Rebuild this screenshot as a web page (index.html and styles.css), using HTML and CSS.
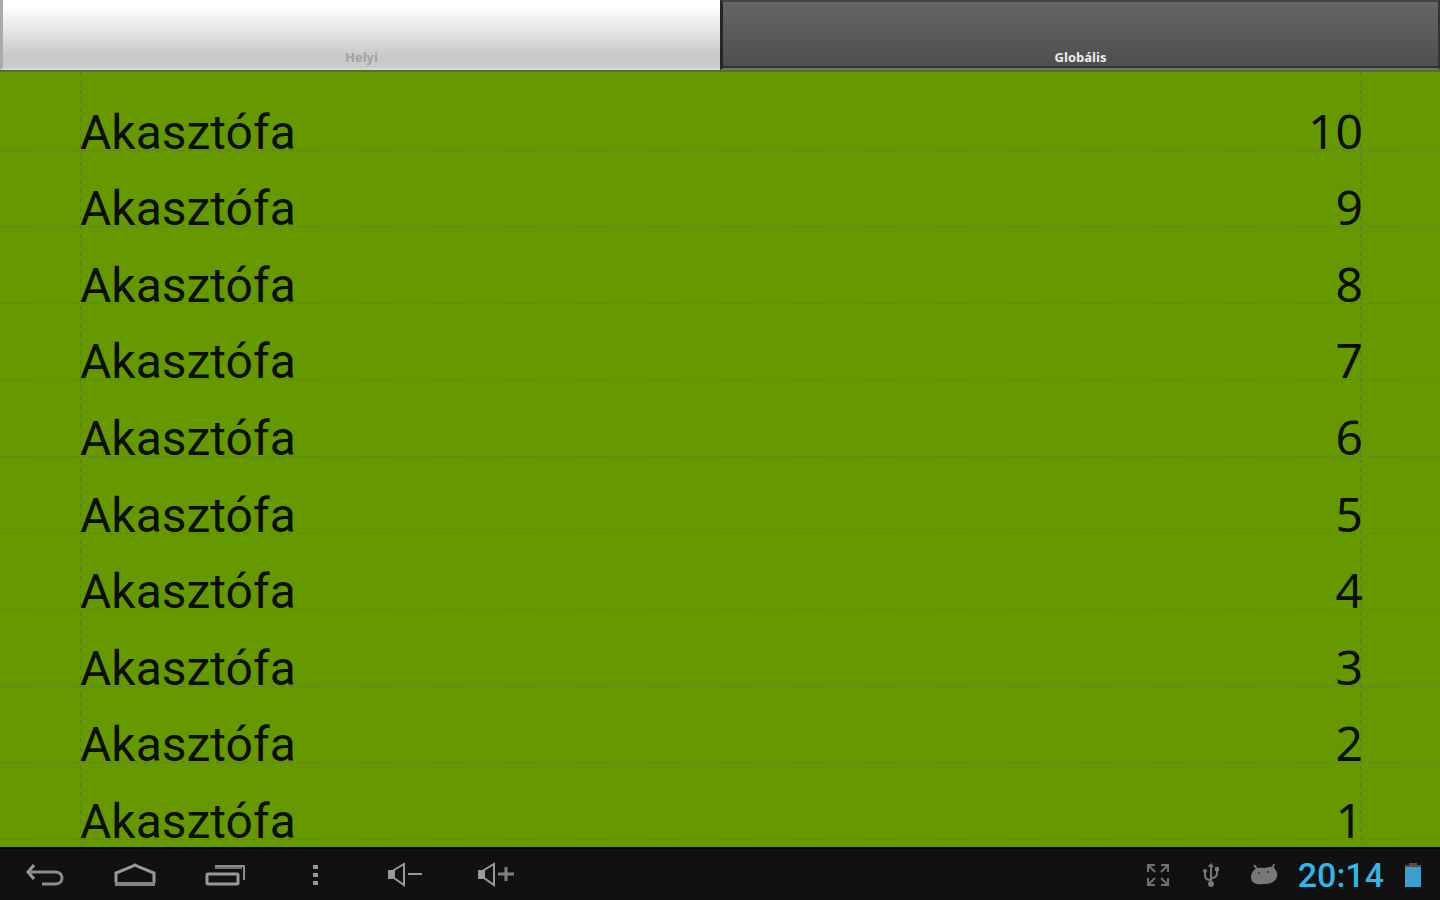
FILE: index.html
```html
<!DOCTYPE html>
<html lang="hu">
<head>
  <meta charset="UTF-8">
  <meta name="viewport" content="width=device-width, initial-scale=1.0">
  <title>Akasztófa</title>
  <link rel="stylesheet" href="styles.css">
</head>
<body>
  <!-- Tabs -->
  <nav class="tabs">
    <button class="tab" type="button">Helyi</button>
    <button class="tab active" type="button">Globális</button>
  </nav>

  <!-- Score list -->
  <main class="board">
    <table class="scores">
      <tbody>
        <tr><td class="name">Akasztófa</td><td class="score">10</td></tr>
        <tr><td class="name">Akasztófa</td><td class="score">9</td></tr>
        <tr><td class="name">Akasztófa</td><td class="score">8</td></tr>
        <tr><td class="name">Akasztófa</td><td class="score">7</td></tr>
        <tr><td class="name">Akasztófa</td><td class="score">6</td></tr>
        <tr><td class="name">Akasztófa</td><td class="score">5</td></tr>
        <tr><td class="name">Akasztófa</td><td class="score">4</td></tr>
        <tr><td class="name">Akasztófa</td><td class="score">3</td></tr>
        <tr><td class="name">Akasztófa</td><td class="score">2</td></tr>
        <tr><td class="name">Akasztófa</td><td class="score">1</td></tr>
      </tbody>
    </table>
  </main>

  <!-- System bar -->
  <footer class="system-bar">
    <div class="nav-buttons">
      <button type="button" aria-label="Vissza">
        <svg width="42" height="28" viewBox="0 0 42 28" fill="none" stroke="#999">
          <path d="M10 4L4 11L10 18" stroke-width="3"/>
          <path d="M5 11H31C36 11 38 14 38 17C38 20 36 23 31 23H18" stroke-width="3" stroke="#8c8c8c"/>
        </svg>
      </button>
      <button type="button" aria-label="Kezdőlap">
        <svg width="42" height="28" viewBox="0 0 42 28" fill="none" stroke="#999">
          <path d="M2 22V12L17 6L21 4L25 6L40 12V22" stroke-width="3"/>
          <path d="M1 23H41" stroke-width="4" stroke="#858585"/>
        </svg>
      </button>
      <button type="button" aria-label="Legutóbbiak">
        <svg width="42" height="28" viewBox="0 0 42 28" fill="none">
          <path d="M11 6H38" stroke-width="4" stroke="#707070"/>
          <path d="M11 5H40V19" stroke-width="2" stroke="#8c8c8c"/>
          <rect x="3" y="13" width="31" height="10" rx="1" stroke-width="3" stroke="#999"/>
        </svg>
      </button>
      <button type="button" aria-label="Menü">
        <svg width="42" height="28" viewBox="0 0 42 28" fill="#999">
          <path d="M19 4h5v4h-5zM19 12h5v4h-5zM19 20h5v4h-5z"/>
        </svg>
      </button>
      <button type="button" aria-label="Halkítás">
        <svg width="42" height="28" viewBox="0 0 42 28" fill="none" stroke="#999" stroke-width="2">
          <path d="M10 9L20 3V24L10 17Z"/>
          <path d="M4 9h5v9h-5z" fill="#999" stroke="none"/>
          <path d="M24 13H38"/>
        </svg>
      </button>
      <button type="button" aria-label="Hangosítás">
        <svg width="42" height="28" viewBox="0 0 42 28" fill="none" stroke="#999" stroke-width="2">
          <path d="M10 9L20 3V24L10 17Z"/>
          <path d="M4 9h5v9h-5z" fill="#999" stroke="none"/>
          <path d="M24 13H40M32 6V20" stroke-width="3" stroke="#808080"/>
        </svg>
      </button>
    </div>
    <div class="status">
      <div class="icons">
        <svg width="28" height="28" viewBox="0 0 28 28" fill="none" stroke="#707070" stroke-width="2">
          <path d="M4 11V4H11M17 4H24V11M24 17V24H17M11 24H4V17M4 4L11 11M24 4L17 11M24 24L17 17M4 24L11 17"/>
        </svg>
        <svg width="28" height="28" viewBox="0 0 28 28" fill="none" stroke="#787878" stroke-width="2">
          <path d="M14 22V5M14 19C10 19 8 17 8 14V9M14 17C18 17 20 15 20 12V8"/>
          <path d="M11 6L14 2L17 6Z" fill="#787878" stroke="none"/>
          <circle cx="14" cy="23" r="3" fill="#787878" stroke="none"/>
          <circle cx="8" cy="10" r="2" fill="#787878" stroke="none"/>
          <path d="M18 6h4v4h-4z" fill="#787878" stroke="none"/>
        </svg>
        <svg width="28" height="28" viewBox="0 0 28 28">
          <path d="M4 4L8 9M24 3L22 9" stroke="#787878" stroke-width="2"/>
          <path d="M14 7C17 7 19 5 22 6C25 7 26 9 27 12C28 16 26 19 23 21C20 23 17 23 14 23C11 23 7 24 4 22C1 20 0 16 2 12C4 7 9 6 14 7Z" fill="#787878"/>
          <circle cx="9" cy="12" r="1" fill="#333"/>
          <circle cx="18" cy="11" r="1" fill="#333"/>
        </svg>
      </div>
      <time class="clock">20:14</time>
      <svg class="battery" width="18" height="28" viewBox="0 0 18 28">
        <path d="M5 2H13V4H17V7H1V4H5Z" fill="#59504d"/>
        <path d="M1 6H17V26H1Z" fill="#3ba1cc"/>
      </svg>
    </div>
  </footer>
</body>
</html>
```
FILE: styles.css
```css
* {
  box-sizing: border-box;
}
body {
  margin: 0;
  height: 100vh;
  display: flex;
  flex-direction: column;
  background-color: #669900;
  font-family: Roboto, sans-serif;
}
button {
  border: none;
  padding: 0;
  background: none;
  cursor: pointer;
}
.tabs {
  display: flex;
  height: 72px;
  flex-shrink: 0;
  border-bottom: 2px solid #5c6648;
}
.tab {
  width: 50%;
  display: flex;
  align-items: flex-end;
  justify-content: center;
  padding-bottom: 3px;
  border-left: 3px solid #aaa;
  border-bottom: 2px solid #d8d8dc;
  background: linear-gradient(#fff 10%, #cacaca 80%);
  color: #a2a2a2;
  font-family: "Open Sans", sans-serif;
  font-size: 13px;
  line-height: 16px;
  font-weight: bold;
}
.tab.active {
  border-top: 2px solid #444;
  border-left: 3px solid #262626;
  border-right: 2px solid #333;
  border-bottom: 2px solid #707070;
  background: linear-gradient(#666, #4d4d4d);
  box-shadow: inset 0 -2px #333;
  color: #eee;
}

/* Vertical guides at both margins */
.board {
  flex: 1;
  min-height: 0;
  display: flex;
  padding: 2px 0 7px;
  background:
    repeating-linear-gradient(#568020 0 4px, transparent 4px 9px) 80px 0 / 1px 100% no-repeat,
    repeating-linear-gradient(#568020 0 4px, transparent 4px 9px) calc(100% - 79px) 0 / 1px 100% no-repeat;
}
.scores {
  width: 100%;
  border-collapse: collapse;
}
.scores tr {
  background: repeating-linear-gradient(90deg, #5a842c 0 5px, transparent 5px 9px) 0 100% / 100% 1px no-repeat;
}
.scores td {
  padding: 0 80px;
  vertical-align: bottom;
  font-size: 48px;
  color: #0a0f00;
}
.scores .name {
  line-height: 36px;
}
.scores .score {
  font-family: "Noto Sans", sans-serif;
  line-height: 40px;
  text-align: right;
  padding-right: 77px;
}

.system-bar {
  display: flex;
  justify-content: space-between;
  align-items: center;
  height: 53px;
  flex-shrink: 0;
  border-top: 2px solid #020210;
  background-color: #111;
}
.nav-buttons {
  display: flex;
}
.nav-buttons button {
  display: flex;
  align-items: center;
  justify-content: center;
  width: 90px;
  height: 48px;
}
.status {
  display: flex;
  align-items: center;
  gap: 20px;
  padding-right: 18px;
}
.icons {
  display: flex;
  gap: 25px;
}
.clock {
  color: #33b5e5;
  font-size: 34px;
  line-height: 40px;
  font-weight: 500;
}
```
